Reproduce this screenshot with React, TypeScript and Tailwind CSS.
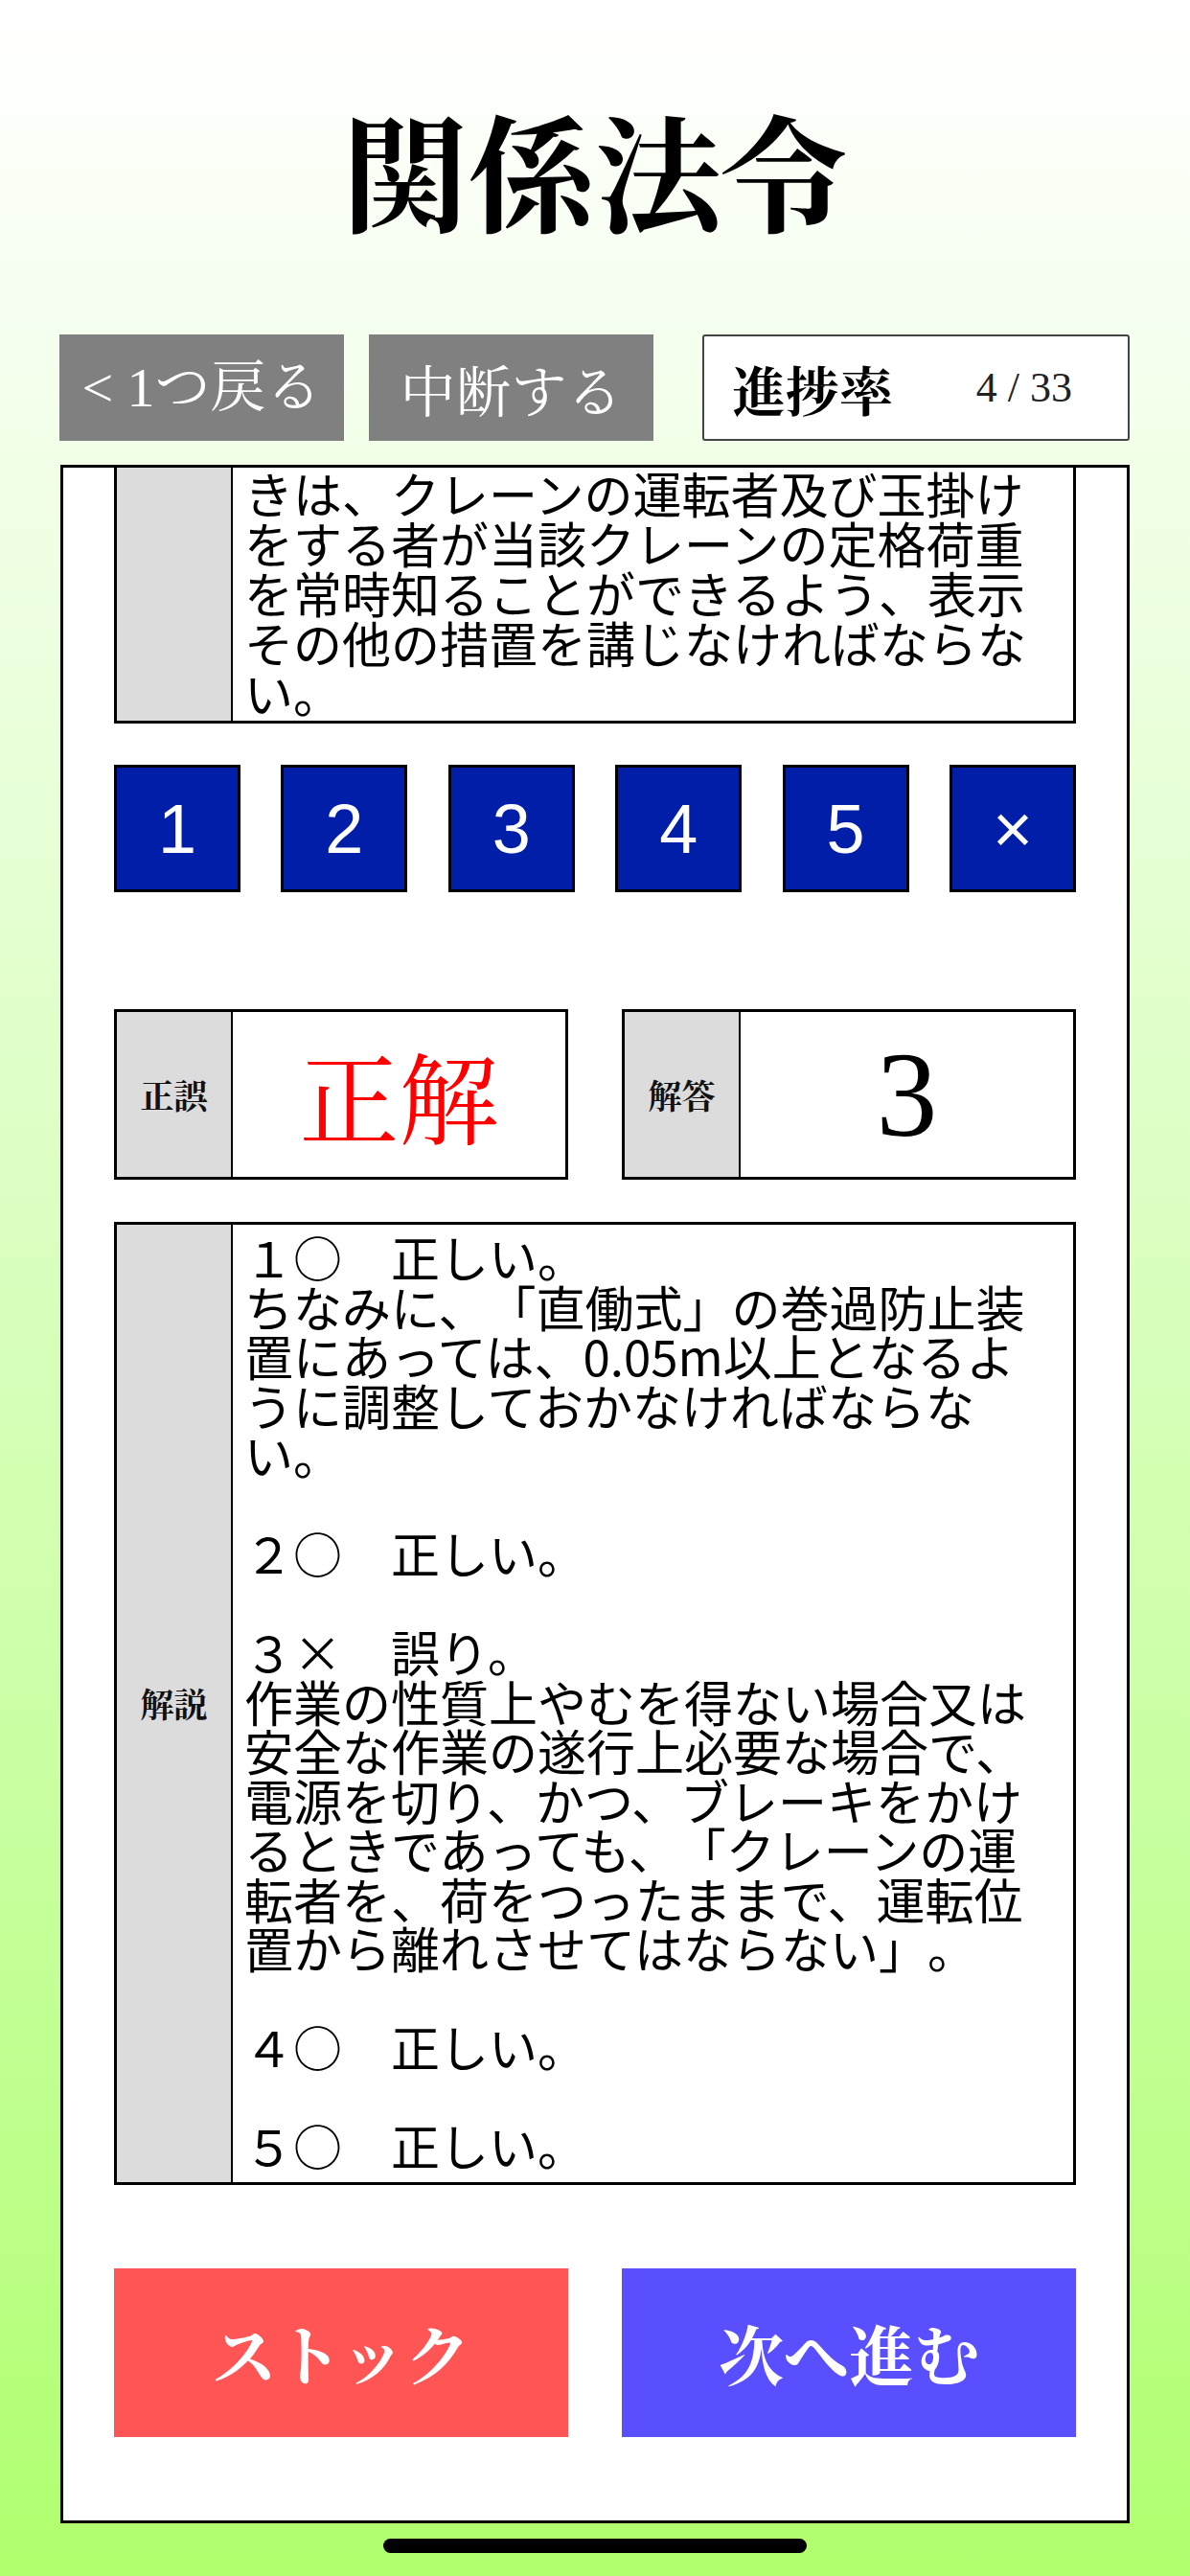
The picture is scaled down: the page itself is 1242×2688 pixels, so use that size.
import React from "react";

const questionLines = [
  "きは、クレーンの運転者及び玉掛け",
  "をする者が当該クレーンの定格荷重",
  "を常時知ることができるよう、表示",
  "その他の措置を講じなければならな",
  "い。",
];

const explanationLines = [
  "１○　正しい。",
  "ちなみに、「直働式」の巻過防止装",
  "置にあっては、0.05m以上となるよ",
  "うに調整しておかなければならな",
  "い。",
  "",
  "２○　正しい。",
  "",
  "３×　誤り。",
  "作業の性質上やむを得ない場合又は",
  "安全な作業の遂行上必要な場合で、",
  "電源を切り、かつ、ブレーキをかけ",
  "るときであっても、「クレーンの運",
  "転者を、荷をつったままで、運転位",
  "置から離れさせてはならない」。",
  "",
  "４○　正しい。",
  "",
  "５○　正しい。",
];

const choices = ["1", "2", "3", "4", "5", "×"];

function GrayLabel({ text }: { text?: string }) {
  return (
    <div className="w-[121px] shrink-0 bg-[#dcdcdc] border-r-2 border-black flex items-center justify-center">
      {text ? (
        <span className="font-['Noto_Serif_CJK_JP','Noto_Sans_CJK_JP',serif] font-bold text-[35px] leading-none text-[#111]">
          {text}
        </span>
      ) : null}
    </div>
  );
}

export default function App() {
  return (
    <div className="w-[1242px] h-[2688px] overflow-hidden bg-gradient-to-b from-white to-[#b0ff6e] flex flex-col font-['Noto_Sans_CJK_JP',sans-serif] [text-spacing-trim:space-all]">
      {/* Title */}
      <div className="h-[349px] flex items-center justify-center">
        <h1 className="font-['Noto_Serif_CJK_JP','Noto_Sans_CJK_JP',serif] font-bold text-[132px] leading-none text-black">
          関係法令
        </h1>
      </div>

      {/* Top controls */}
      <div className="h-[111px] flex pl-[62px]">
        <button className="w-[297px] h-full bg-[#808080] text-white flex items-center justify-center font-['Liberation_Serif','Noto_Serif_CJK_JP','Noto_Sans_CJK_JP',serif] text-[58px] leading-none">
          &lt; 1つ戻る
        </button>
        <button className="ml-[26px] w-[297px] h-full bg-[#808080] text-white flex items-center justify-center font-['Noto_Serif_CJK_JP','Noto_Sans_CJK_JP',serif] text-[58px] leading-none">
          中断する
        </button>
        <div className="ml-[51px] w-[446px] h-full bg-white border-2 border-[#444] rounded-[3px] flex items-center pl-[29px] pr-[58px]">
          <span className="font-['Noto_Serif_CJK_JP','Noto_Sans_CJK_JP',serif] font-bold text-[56px] leading-none text-black">
            進捗率
          </span>
          <span className="ml-auto font-['Liberation_Serif',serif] text-[44px] leading-none text-[#222]">
            4 / 33
          </span>
        </div>
      </div>

      {/* Main card */}
      <div className="mt-[25px] ml-[63px] w-[1116px] h-[2148px] bg-white border-[3px] border-black overflow-hidden flex flex-col px-[53px]">
        {/* Question (scrolled) */}
        <div className="h-[267px] shrink-0 flex border-x-[3px] border-b-[3px] border-black">
          <GrayLabel />
          <div className="flex-1 pl-[12px] text-[51px] leading-[52px] text-black">
            {questionLines.map((l, i) => (
              <div key={i} className="whitespace-nowrap">
                {l}
              </div>
            ))}
          </div>
        </div>

        {/* Choices */}
        <div className="mt-[43px] flex justify-between">
          {choices.map((c) => (
            <button
              key={c}
              className="w-[132px] h-[133px] bg-[#001ea8] border-[3px] border-black text-white flex items-center justify-center font-['Liberation_Sans',sans-serif] text-[72px] leading-none"
            >
              {c}
            </button>
          ))}
        </div>

        {/* Result */}
        <div className="mt-[122px] flex justify-between">
          <div className="w-[474px] h-[178px] flex border-[3px] border-black">
            <GrayLabel text="正誤" />
            <div className="flex-1 flex items-center justify-center">
              <span className="font-['Noto_Serif_CJK_JP','Noto_Sans_CJK_JP',serif] text-[104px] leading-none text-[#ff0000]">
                正解
              </span>
            </div>
          </div>
          <div className="w-[474px] h-[178px] flex border-[3px] border-black">
            <GrayLabel text="解答" />
            <div className="flex-1 flex items-center justify-center">
              <span className="font-['Liberation_Serif',serif] text-[128px] leading-none text-black">
                3
              </span>
            </div>
          </div>
        </div>

        {/* Explanation */}
        <div className="mt-[44px] h-[1005px] shrink-0 flex border-[3px] border-black">
          <GrayLabel text="解説" />
          <div className="flex-1 pl-[12px] pt-[8px] text-[51px] leading-[51.5px] text-black">
            {explanationLines.map((l, i) => (
              <div key={i} className="whitespace-nowrap">
                {l === "" ? "\u00a0" : l}
              </div>
            ))}
          </div>
        </div>

        {/* Bottom buttons */}
        <div className="mt-[87px] flex justify-between">
          <button className="w-[474px] h-[176px] bg-[#ff5555] text-white flex items-center justify-center font-['Noto_Serif_CJK_JP','Noto_Sans_CJK_JP',serif] font-bold text-[68px] leading-none">
            ストック
          </button>
          <button className="w-[474px] h-[176px] bg-[#5a4fff] text-white flex items-center justify-center font-['Noto_Serif_CJK_JP','Noto_Sans_CJK_JP',serif] font-bold text-[68px] leading-none">
            次へ進む
          </button>
        </div>
      </div>

      {/* Home indicator */}
      <div className="mt-[16px] mx-auto w-[442px] h-[15px] rounded-full bg-black" />
    </div>
  );
}
